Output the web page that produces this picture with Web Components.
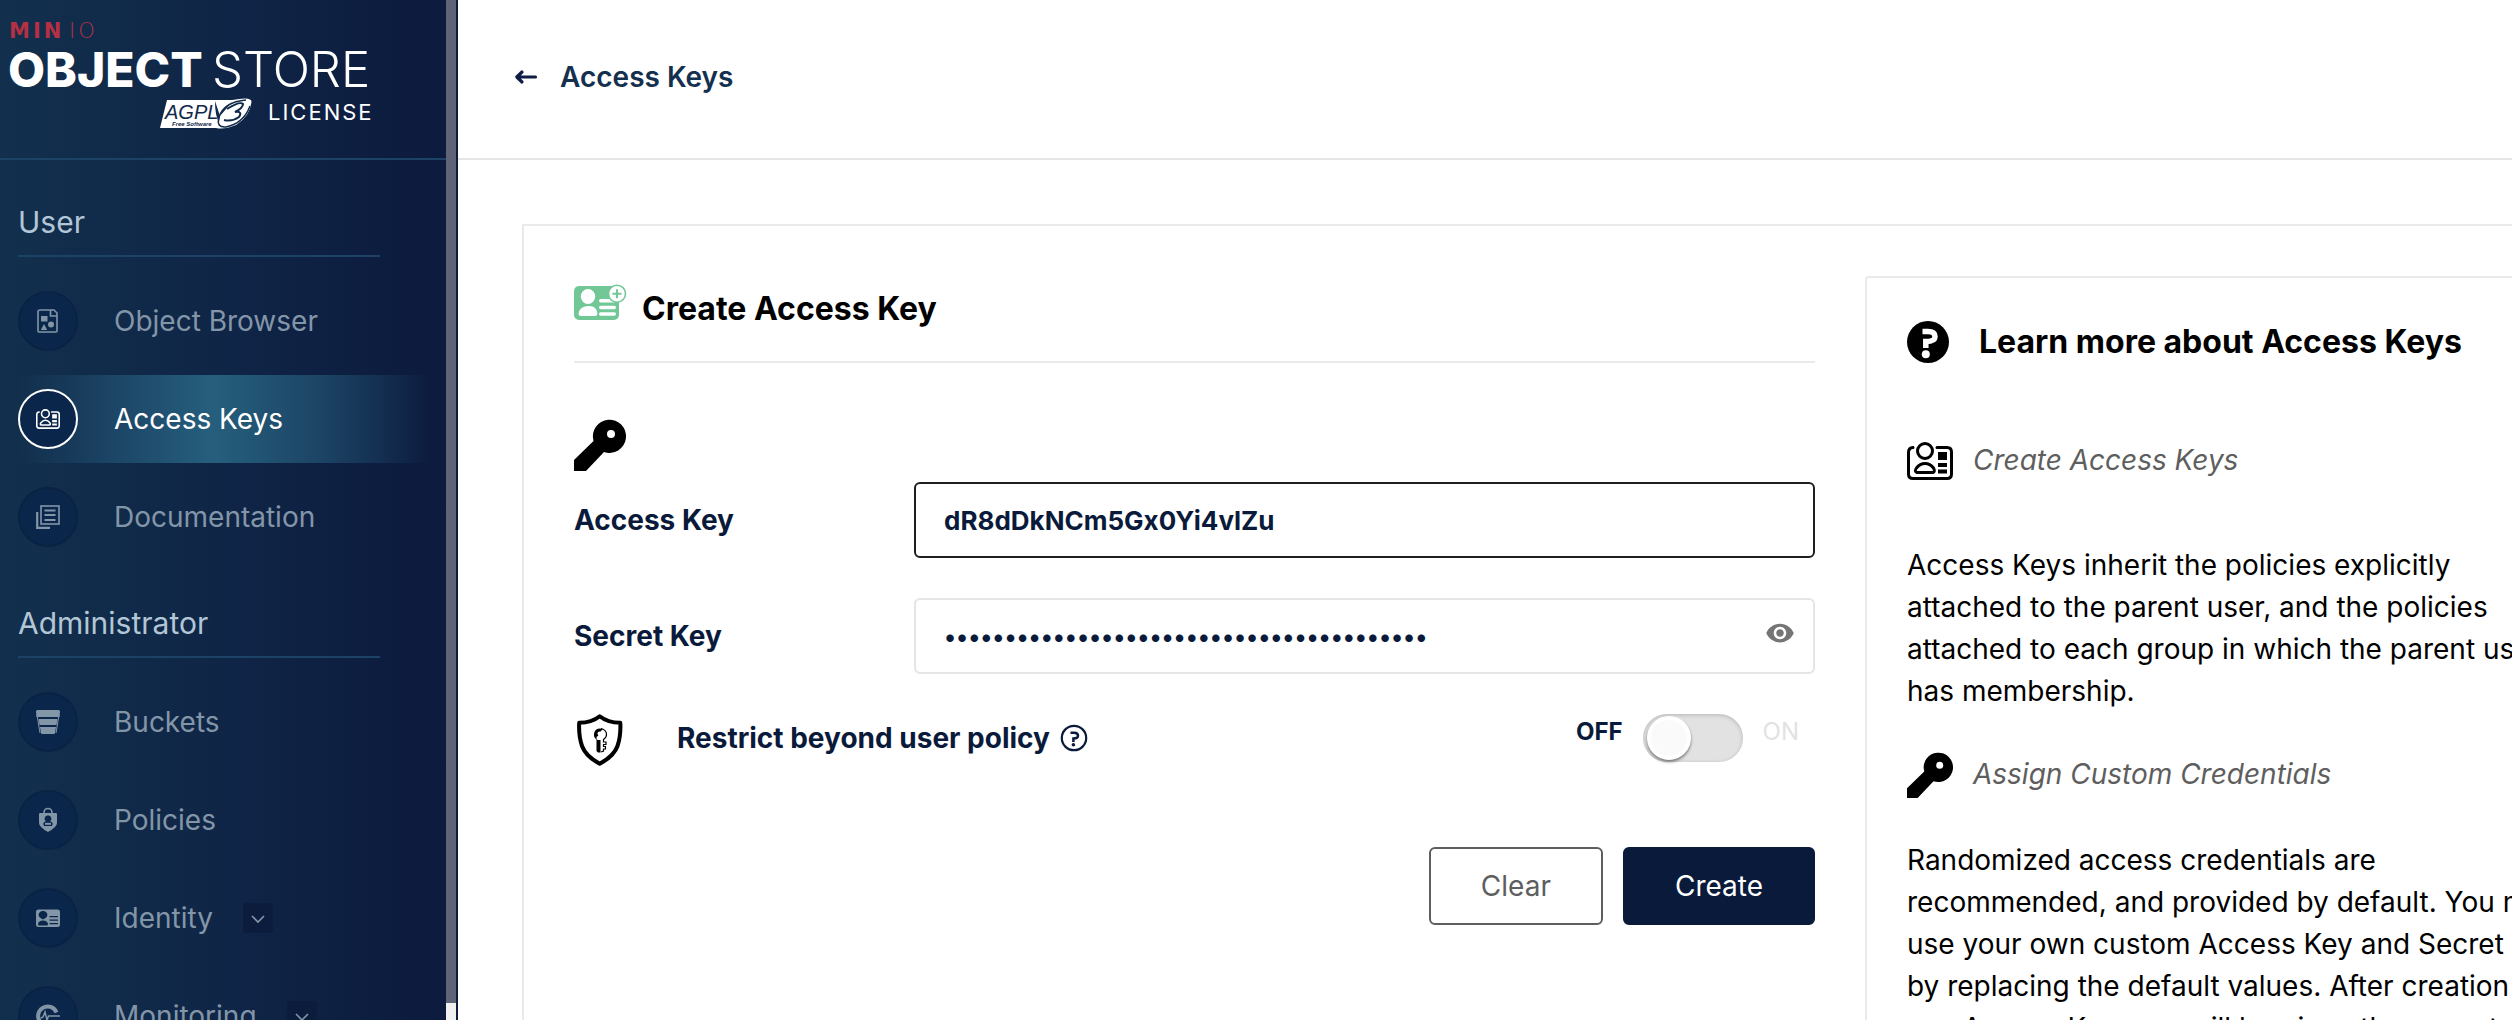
<!DOCTYPE html>
<html lang="en">
<head>
<meta charset="utf-8">
<title>Create Access Key</title>
<style>
  html, body { margin: 0; height: 100%; }
  body { font-family: Inter, "Liberation Sans", sans-serif; font-size: 28px; background: #fff; color: #000; overflow: hidden; }
</style>
</head>
<body>
<app-shell>
  <side-nav slot="nav">
    <nav-section heading="User">
      <nav-item icon="browser">Object Browser</nav-item>
      <nav-item icon="id" active>Access Keys</nav-item>
      <nav-item icon="docs">Documentation</nav-item>
    </nav-section>
    <nav-section heading="Administrator">
      <nav-item icon="bucket">Buckets</nav-item>
      <nav-item icon="policy">Policies</nav-item>
      <nav-item icon="identity" expandable>Identity</nav-item>
      <nav-item icon="monitor" expandable>Monitoring</nav-item>
    </nav-section>
  </side-nav>
  <page-header>Access Keys</page-header>
  <page-card>
    <key-form></key-form>
    <help-panel slot="aside" heading="Learn more about Access Keys">
      <help-topic icon="id" heading="Create Access Keys" class="intro">Access Keys inherit the policies explicitly attached to the parent user, and the policies attached to each group in which the parent user has membership.</help-topic>
      <help-topic icon="key" heading="Assign Custom Credentials">Randomized access credentials are recommended, and provided by default. You may use your own custom Access Key and Secret Key by replacing the default values. After creation of any Access Key, you will be given the opportunity to view and download the account credentials.</help-topic>
    </help-panel>
  </page-card>
</app-shell>
<script>
const ICONS = {
  key: ['0 0 52 52', '<path fill-rule="evenodd" fill="currentColor" d="M0 41 19.5 22A16.6 16.6 0 1 1 30 33L12 52H0ZM37 11a4 4 0 1 0 0 8 4 4 0 0 0 0-8Z"/>'],
  id: ['0 0 46 46', '<g fill="none" stroke="currentColor" stroke-width="3" stroke-linecap="round" stroke-linejoin="round"><path d="M6 9.6Q1.500 10 1.500 14.500V36Q1.500 40.500 6 40.500H40Q44.500 40.500 44.500 36V14Q44.500 9.500 40 9.500H30"/><circle cx="18" cy="13" r="7.500"/><path d="M10 34.500H26Q28.500 33.500 26.500 30 23 25.500 18 25.500T9.500 30Q7 33.500 10 34.500Z"/></g><path fill="currentColor" d="M31 14h9v8h-9zM31 25h9v4h-9zM31 31.500h9v4h-9z"/>'],
  add: ['0 0 52 52', '<rect y="10" width="45" height="34" rx="5" fill="currentColor"/><g fill="#fff"><ellipse cx="14" cy="20.500" rx="7.200" ry="7.500"/><path d="M4.600 38Q5 30.500 14 30t9.300 8Q23.300 40 21 40H7Q4.600 40 4.600 38Z"/><rect x="25" y="23" width="17" height="3.500" rx="1.700"/><rect x="25" y="29.700" width="17" height="3.500" rx="1.700"/><rect x="25" y="36.200" width="17" height="3.500" rx="1.700"/></g><circle cx="43" cy="17.700" r="8.500" fill="#fff" stroke="currentColor" stroke-width="1.600"/><path d="M43 13.200v9M38.500 17.700h9" stroke="currentColor" stroke-width="2"/>'],
  shield: ['0 0 52 52', '<path d="M25.700 2.200Q18 8.500 5.200 8.800 4.500 22 8 32T25.700 49.800Q40 42 43.500 32T46.300 8.800Q33.500 8.500 25.700 2.200Z" fill="none" stroke="currentColor" stroke-width="4" stroke-linejoin="round"/><path fill="currentColor" d="M26 14.500a6 6 0 0 0-3.500 10.900V37l1.500 1.500h2.500V26H25a2 2 0 0 1-1-4l1-3 4-4Z"/><circle cx="25.500" cy="19.500" r="2" fill="#fff"/><path d="M27 14.500q5.500 1.500 5.500 6 0 3-3 5v2.500h2.500v2.500h-2.500v2h2v2.500h-2v2L27 38" fill="none" stroke="currentColor" stroke-width="1.200"/>'],
  help: ['0 0 42 42', '<circle cx="21" cy="21" r="21" fill="currentColor"/><path d="M15.500 10.500H21Q28 10.500 28 15.700 28 20.500 18.800 20.500V27" fill="none" stroke="#fff" stroke-width="5.500"/><circle cx="18.800" cy="33.200" r="4" fill="#fff"/>'],
  info: ['0 0 28 28', '<circle cx="14" cy="14" r="12.200" fill="none" stroke="currentColor" stroke-width="2.200"/><path d="M10.500 8.800H14Q18 8.800 18 11.800 18 14.500 13.400 14.500V18" fill="none" stroke="currentColor" stroke-width="2.500"/><circle cx="13.400" cy="20.700" r="1.800" fill="currentColor"/>'],
  eye: ['0 0 24 24', '<path fill="currentColor" d="M12 4.500C7 4.500 2.730 7.610 1 12c1.730 4.390 6 7.500 11 7.500s9.270-3.110 11-7.500c-1.730-4.390-6-7.500-11-7.500zM12 17c-2.760 0-5-2.240-5-5s2.240-5 5-5 5 2.240 5 5-2.240 5-5 5zm0-8c-1.660 0-3 1.340-3 3s1.340 3 3 3 3-1.340 3-3-1.340-3-3-3z"/>'],
  back: ['0 0 24 24', '<path d="M21.500 12H3M8 7l-5.200 5L8 17" fill="none" stroke="currentColor" stroke-width="3.200" stroke-linecap="round" stroke-linejoin="round"/>'],
  chevron: ['0 0 30 30', '<path d="m9 13 6 6 6-6" fill="none" stroke="currentColor" stroke-width="1.600"/>'],
  browser: ['0 0 24 24', '<path d="M4 1h14l3 3v18q0 1-1 1H3q-1 0-1-1V3q0-2 2-2ZM14.500 1v6H21" fill="none" stroke="currentColor" stroke-width="1.600"/><path fill="currentColor" d="M5 7h6.500v5.500H5zM8 15l3.200 6H4.800z"/><circle cx="15" cy="15.500" r="3" fill="currentColor"/>'],
  docs: ['0 0 24 24', '<rect x="5" y="1" width="18" height="18" fill="none" stroke="currentColor" stroke-width="1.600"/><path d="M1.200 7v15.800H14" fill="none" stroke="currentColor" stroke-width="2.200"/><path d="M8.500 5.500h11M8.500 10h11M8.500 15h11" stroke="currentColor" stroke-width="2"/>'],
  bucket: ['0 0 24 24', '<path fill="currentColor" d="M1.500 0h21Q24 0 24 1.500L23.500 7H.5L0 1.500Q0 0 1.500 0ZM2.500 9h19l-1 6h-17ZM4 17h16l-1 6q0 1-1 1H6q-1 0-1-1Z"/><path d="M1 5 4 23M23 5l-3 18" stroke="currentColor" stroke-width="1"/>'],
  policy: ['0 0 24 24', '<path d="M8 6V4.500a4 4 0 0 1 8 0V6" fill="none" stroke="currentColor" stroke-width="1.600"/><path fill-rule="evenodd" fill="currentColor" d="M3 6q0-1 1-1h16q1 0 1 1v9q0 4-9 9-9-5-9-9ZM12 7.500a3 3 0 0 0-2 5.500q-2.500 1-2.800 2.500L8 18h8l.8-2.500Q16.500 14 14 13a3 3 0 0 0-2-5.500Z"/><path d="M9 15.800h6" stroke="currentColor" stroke-width="2"/>'],
  identity: ['0 0 24 24', '<path fill-rule="evenodd" fill="currentColor" d="M2.500 3.500h19Q24 3.500 24 6v13q0 2-2.500 2h-19Q0 21 0 19V6q0-2.500 2.500-2.500ZM7 5a3.800 3.800 0 0 0-2.500 7L7 13.500 9.500 12A3.800 3.800 0 0 0 7 5ZM2 18q0 1.500 1 1.500h8q1 0 1-1.500-.5-3.500-5-3.500T2 18ZM13.500 10v1.200H22V10ZM13.500 13.500v1.200H22v-1.200ZM13.500 17v1.200H22V17Z"/>'],
  monitor: ['0 0 24 24', '<path d="M20.500 8.500A9.500 9.500 0 1 0 19 18" fill="none" stroke="currentColor" stroke-width="4"/><path d="M5 14l2-1 2-5 2 8 1.500-4H24" fill="none" stroke="currentColor" stroke-width="1.500"/>']
};

const define = (name, html, setup) => {
  const template = document.createElement('template');
  template.innerHTML = html;
  customElements.define(name, class extends HTMLElement {
    connectedCallback() {
      if (this.shadowRoot) return;
      const root = this.attachShadow({ mode: 'open' });
      root.append(template.content.cloneNode(true));
      if (setup) setup(this, root);
    }
  });
};

define('ui-icon', `<style>
  :host { display: block; flex: none; width: var(--icon-size, 24px); height: var(--icon-size, 24px); }
  svg { display: block; width: 100%; height: 100%; overflow: visible; }
</style><svg aria-hidden="true"></svg>`, (host, root) => {
  const svg = root.querySelector('svg');
  const [box, shape] = ICONS[host.getAttribute('name')];
  svg.setAttribute('viewBox', box);
  svg.innerHTML = shape;
});

define('app-shell', `<style>
  :host { display: flex; height: 100vh; }
  main { flex: 1; min-width: 0; overflow: hidden; }
</style><slot name="nav"></slot><main><slot></slot></main>`);

define('brand-logo', `<style>
  :host { display: block; height: 158px; border-bottom: 2px solid #1c4266; color: #fff; }
  svg { display: block; height: 158px; width: 446px; }
</style>
<svg viewBox="0 0 446 158" role="img" aria-label="MinIO Object Store, AGPL v3 license">
  <g fill="#b53044">
    <text x="9" y="38" font-family="DejaVu Sans" font-size="21" font-weight="700" letter-spacing="3">MIN</text>
    <text x="69" y="38" font-family="DejaVu Sans" font-size="21" font-weight="200" letter-spacing="3">IO</text>
  </g>
  <g fill="#fff">
    <text x="8" y="87" font-family="Inter" font-size="48" font-weight="800">OBJECT</text>
    <text x="212" y="87" font-family="Inter" font-size="49" font-weight="300">STORE</text>
    <path d="M167 100H232Q252 96 251.500 102 250 116 236 125 224 130 216 128H160Z"/>
    <text x="268" y="120" font-family="Inter" font-size="22" font-weight="400" letter-spacing="2">LICENSE</text>
  </g>
  <g fill="#12294a">
    <text x="165" y="119" font-family="Liberation Sans" font-size="20" font-style="italic">AGPL</text>
    <text x="172" y="126" font-family="Liberation Sans" font-size="6" font-style="italic" font-weight="700">Free Software</text>
    <path d="M215 101l5 15 12-14q-12 6-13 20-4-6-4-21Z"/>
  </g>
  <path d="M246 100Q224 102 219 117 216 128 226 127 244 123 250 106" fill="none" stroke="#12294a" stroke-width="1.500"/>
  <path d="M227 109Q240 101 243 104 243 108 235 112 243 111 239 117 232 122 224 120" fill="none" stroke="#12294a" stroke-width="2"/>
</svg>`);

define('side-nav', `<style>
  :host { display: flex; flex: none; width: 458px; height: 100%; overflow: hidden; background: #0c1b3e; }
  nav { width: 446px; overflow: hidden; background: linear-gradient(90deg, #12304d, #0f2446 55%, #0c1a3d); }
  .track { width: 10px; background: #f0f0f0; }
  .thumb { height: calc(100% - 17px); background: #5e6475; }
</style>
<nav aria-label="Main"><brand-logo></brand-logo><slot></slot></nav>
<div class="track" aria-hidden="true"><div class="thumb"></div></div>`);

define('nav-section', `<style>
  :host { display: block; }
  h2 { margin: 0 66px 20px 18px; padding: 42px 0 13px; border-bottom: 2px solid #1c4266; font-size: 30px; line-height: 40px; font-weight: 400; color: #b3c6d6; }
  .items { display: flex; flex-direction: column; gap: 10px; }
</style><h2></h2><div class="items"><slot></slot></div>`, (host, root) => {
  root.querySelector('h2').textContent = host.getAttribute('heading');
});

define('nav-item', `<style>
  :host { display: flex; align-items: center; height: 88px; padding-left: 18px; color: #8396a8; }
  :host([active]) { color: #fff; background: linear-gradient(90deg, transparent 18px, #1c4465 110px, #265f7d 213px, #1c4465 320px, transparent 430px); }
  a { display: flex; align-items: center; gap: 36px; color: inherit; text-decoration: none; }
  .disc { display: flex; align-items: center; justify-content: center; box-sizing: border-box; width: 60px; height: 60px; border: 2px solid #0a2244; border-radius: 50%; background: #0a274b; }
  :host([active]) .disc { border-color: #fff; }
  button { display: none; margin-left: 30px; padding: 0; border: 0; border-radius: 4px; background: #0c1c3d; color: inherit; --icon-size: 30px; }
  :host([expandable]) button { display: block; }
</style>
<a href="#"><span class="disc"></span><span><slot></slot></span></a><button type="button" aria-label="Expand"><ui-icon name="chevron"></ui-icon></button>`, (host, root) => {
  const icon = document.createElement('ui-icon');
  icon.setAttribute('name', host.getAttribute('icon'));
  root.querySelector('.disc').append(icon);
});

define('page-header', `<style>
  :host { display: flex; align-items: center; height: 154px; padding: 0 56px 4px; border-bottom: 2px solid #e5e5e5; }
  a { display: flex; align-items: center; gap: 22px; color: #0f1d45; text-decoration: none; }
  h1 { margin: 0; font-size: 28px; font-weight: 600; line-height: 40px; color: #15304f; }
</style><a href="#"><ui-icon name="back"></ui-icon><h1><slot></slot></h1></a>`);

define('page-card', `<style>
  :host { display: block; padding: 64px; }
  section { display: grid; grid-template-columns: minmax(1241px, 1fr) 746px; gap: 50px; box-sizing: border-box; width: max-content; min-width: 100%; padding: 50px; border: 2px solid #eaeaea; }
</style><section><slot></slot><slot name="aside"></slot></section>`);

define('text-field', `<style>
  :host { display: flex; align-items: center; color: #0a1a3a; }
  label { flex: none; width: 340px; font-weight: 700; line-height: 40px; }
  .box { display: flex; align-items: center; flex: 1; box-sizing: border-box; height: 76px; padding: 0 18px 0 28px; border: 2px solid #e5e5e5; border-radius: 6px; }
  :host([current]) .box { border-color: #1f1f1f; }
  input { flex: 1; min-width: 0; padding: 0; border: 0; outline: 0; background: none; font: inherit; font-size: 26px; font-weight: 700; color: inherit; }
  input[type="password"] { font-size: 24px; font-weight: 600; }
  button { display: none; padding: 0 0 6px; border: 0; background: none; color: #757575; --icon-size: 30px; }
  :host([secret]) button { display: block; }
</style>
<label for="f"></label><div class="box"><input id="f" autocomplete="off" spellcheck="false"><button type="button" aria-label="Show value"><ui-icon name="eye"></ui-icon></button></div>`, (host, root) => {
  root.querySelector('label').textContent = host.getAttribute('label');
  const input = root.querySelector('input');
  input.type = host.hasAttribute('secret') ? 'password' : 'text';
  input.value = host.getAttribute('value');
  root.querySelector('button').onclick = () => { input.type = input.type === 'text' ? 'password' : 'text'; };
});

define('toggle-row', `<style>
  :host { display: flex; align-items: flex-start; height: 52px; color: #0a1a3a; }
  .mark { color: #000; --icon-size: 52px; }
  .text { display: flex; align-items: center; gap: 10px; flex: 1; padding-left: 51px; --icon-size: 28px; }
  label { font-weight: 700; line-height: 48px; }
  .switch { display: flex; gap: 20px; padding-right: 16px; font-size: 24px; line-height: 36px; }
  .off { font-weight: 700; }
  .on { color: #e2e2e2; }
  input { appearance: none; flex: none; display: flex; align-items: center; box-sizing: border-box; width: 100px; height: 48px; margin: 0; padding: 4px; border-radius: 24px; background: #e2e2e2; box-shadow: inset 0 1px 4px #0003; }
  input::before { content: ""; box-sizing: border-box; width: 44px; height: 44px; border: 4px solid #fff; border-radius: 50%; background: #fafafa; box-shadow: 0 2px 3px #0007; }
  input:checked { justify-content: flex-end; }
</style>
<ui-icon class="mark" name="shield"></ui-icon>
<div class="text"><label for="t">Restrict beyond user policy</label><ui-icon name="info"></ui-icon></div>
<div class="switch"><span class="off">OFF</span><input type="checkbox" role="switch" id="t"><span class="on">ON</span></div>`);

define('action-button', `<style>
  :host { display: block; }
  button { height: 78px; padding: 0 50px; border: 2px solid #5e5e5e; border-radius: 6px; background: #fff; font: inherit; color: #5e5e5e; }
  :host([primary]) button { border-color: #0a1a3a; background: #0a1a3a; color: #fff; }
</style><button type="button"><slot></slot></button>`);

define('key-form', `<style>
  :host { display: block; min-width: 0; }
  header { display: flex; gap: 16px; padding-bottom: 19px; border-bottom: 2px solid #eaeaea; color: #72c796; --icon-size: 52px; }
  h2 { margin: 0; font-size: 32px; line-height: 66px; font-weight: 700; color: #000; }
  .key { margin: 56px 0 11px; --icon-size: 52px; }
  form { display: flex; flex-direction: column; gap: 40px; }
  footer { display: flex; justify-content: flex-end; gap: 20px; padding-top: 41px; }
</style>
<header><ui-icon name="add"></ui-icon><h2>Create Access Key</h2></header>
<ui-icon class="key" name="key"></ui-icon>
<form>
  <text-field label="Access Key" value="dR8dDkNCm5Gx0Yi4vlZu" current></text-field>
  <text-field label="Secret Key" value="0000000000000000000000000000000000000000" secret></text-field>
  <toggle-row></toggle-row>
  <footer><action-button>Clear</action-button><action-button primary>Create</action-button></footer>
</form>`);

define('help-panel', `<style>
  :host { display: block; box-sizing: border-box; padding: 43px 40px; border: 2px solid #eaeaea; border-radius: 4px; }
  header { display: flex; align-items: center; gap: 30px; --icon-size: 42px; }
  h2 { margin: 0; font-size: 32px; line-height: 42px; font-weight: 650; }
  ::slotted(.intro) { --above: 75px; --below: 60px; }
</style><header><ui-icon name="help"></ui-icon><h2></h2></header><slot></slot>`, (host, root) => {
  root.querySelector('h2').textContent = host.getAttribute('heading');
});

define('help-topic', `<style>
  :host { display: block; padding-top: var(--above, 40px); }
  header { display: flex; align-items: center; gap: 20px; --icon-size: 46px; }
  h3 { margin: 0; padding-bottom: 3px; font-size: 28px; line-height: 42px; font-weight: 400; font-style: italic; color: #5e5e5e; }
  p { margin: var(--below, 41px) 0 0; line-height: 42px; }
</style><header><h3></h3></header><p><slot></slot></p>`, (host, root) => {
  root.querySelector('h3').textContent = host.getAttribute('heading');
  const icon = document.createElement('ui-icon');
  icon.setAttribute('name', host.getAttribute('icon'));
  root.querySelector('header').prepend(icon);
});
</script>
</body>
</html>
